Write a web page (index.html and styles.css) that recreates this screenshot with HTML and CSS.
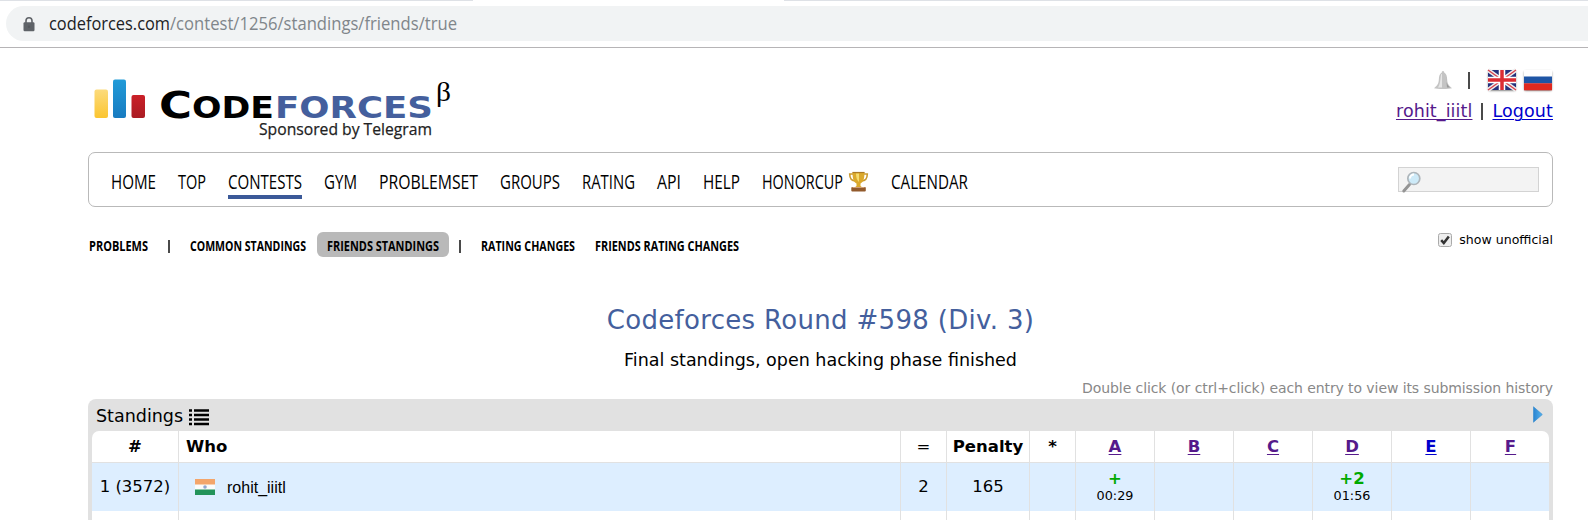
FILE: index.html
```html
<!DOCTYPE html>
<html lang="en">
<head>
<meta charset="utf-8">
<title>Standings - Codeforces</title>
<link rel="stylesheet" href="styles.css">
</head>
<body>
<div class="tabstrip"><i></i><i></i></div>
<div class="toolbar">
  <div class="omnibox">
    <svg class="lock" width="12" height="15" viewBox="0 0 12 15"><path d="M3 6V3.8a3 3 0 0 1 6 0V6" fill="none" stroke="#5f6368" stroke-width="1.6"/><rect x="0.5" y="5.3" width="11" height="9" rx="1.2" fill="#5f6368"/><circle cx="6" cy="9.7" r="1.2" fill="#55595e"/></svg>
    <svg class="url" width="420" height="35"><text x="0" y="24" textLength="121" lengthAdjust="spacingAndGlyphs" fill="#202124">codeforces.com</text><text x="121" y="24" textLength="287" lengthAdjust="spacingAndGlyphs" fill="#80868b">/contest/1256/standings/friends/true</text></svg>
  </div>
</div>
<div class="page">
  <header class="header">
    <svg class="logo" width="370" height="70" viewBox="88 72 370 70">
      <defs>
        <linearGradient id="y" x2="0" y2="1"><stop stop-color="#fcdb7c"/><stop offset="1" stop-color="#fbc530"/></linearGradient>
        <linearGradient id="b" x2="0" y2="1"><stop stop-color="#219bd8"/><stop offset="1" stop-color="#187bc0"/></linearGradient>
        <linearGradient id="r" x2="0" y2="1"><stop stop-color="#cb2028"/><stop offset="1" stop-color="#a91c23"/></linearGradient>
      </defs>
      <rect x="94.500" y="89.500" width="13.500" height="28.500" rx="2" fill="url(#y)"/>
      <rect x="113" y="79.500" width="13" height="38.500" rx="2" fill="url(#b)"/>
      <rect x="131.500" y="95" width="13.500" height="23" rx="2" fill="url(#r)"/>
      <g class="wordmark">
        <text x="159" y="118" font-size="37" textLength="33" lengthAdjust="spacingAndGlyphs">C</text>
        <text x="192" y="118" font-size="31" textLength="82" lengthAdjust="spacingAndGlyphs">ODE</text>
        <text x="275" y="118" font-size="31" textLength="158" lengthAdjust="spacingAndGlyphs" fill="#445f9d">FORCES</text>
      </g>
      <text class="beta" x="436" y="101" textLength="15" lengthAdjust="spacingAndGlyphs">β</text>
      <text class="sponsor" x="259" y="135" textLength="173" lengthAdjust="spacingAndGlyphs">Sponsored by Telegram</text>
    </svg>
    <div class="account">
      <div class="flags">
        <svg class="bell" width="20" height="20" viewBox="0 0 20 20"><path d="M10 1c1 0 1.200 1 1.200 1.600C13.500 4 14 6 14.200 10c.2 3 .8 5 4.800 8.200-3 1-15 1-18 0C5 15 5.600 13 5.800 10 6 6 6.500 4 8.800 2.600 8.800 2 9 1 10 1z" fill="#c4c4c4"/><path d="M8.300 4C7 8 8 13 5 17.500h4V4z" fill="#e6e6e6"/><path d="M13 7c0 5 1 8 4 10.500h-3z" fill="#999"/></svg>
        <span class="bar"></span>
        <svg class="flag uk" width="28" height="20" viewBox="0 0 28 20"><rect width="28" height="20" fill="#25307c"/><path d="M0 0L28 20M28 0L0 20" stroke="#eee" stroke-width="4"/><path d="M0 0L28 20M28 0L0 20" stroke="#d8414d" stroke-width="1.400"/><path d="M14 0V20M0 10H28" stroke="#fff" stroke-width="6.500"/><path d="M14 0V20M0 10H28" stroke="#db2b32" stroke-width="3.500"/></svg>
        <svg class="flag" width="28" height="20" viewBox="0 0 28 20"><rect width="28" height="7" fill="#fff"/><rect y="6.500" width="28" height="7" fill="#1f55a5"/><rect y="13.300" width="28" height="7" fill="#e0291f"/></svg>
      </div>
      <div class="links"><a class="visited" href="#">rohit_iiitl</a><span class="bar"></span><a href="#">Logout</a></div>
    </div>
  </header>
  <nav class="menu">
    <svg width="45" height="26"><text y="20" textLength="45" lengthAdjust="spacingAndGlyphs">HOME</text></svg>
    <svg width="28" height="26"><text y="20" textLength="28" lengthAdjust="spacingAndGlyphs">TOP</text></svg>
    <svg class="current" width="74" height="26"><text y="20" textLength="74" lengthAdjust="spacingAndGlyphs">CONTESTS</text></svg>
    <svg width="33" height="26"><text y="20" textLength="33" lengthAdjust="spacingAndGlyphs">GYM</text></svg>
    <svg width="99" height="26"><text y="20" textLength="99" lengthAdjust="spacingAndGlyphs">PROBLEMSET</text></svg>
    <svg width="60" height="26"><text y="20" textLength="60" lengthAdjust="spacingAndGlyphs">GROUPS</text></svg>
    <svg width="53" height="26"><text y="20" textLength="53" lengthAdjust="spacingAndGlyphs">RATING</text></svg>
    <svg width="24" height="26"><text y="20" textLength="24" lengthAdjust="spacingAndGlyphs">API</text></svg>
    <svg width="37" height="26"><text y="20" textLength="37" lengthAdjust="spacingAndGlyphs">HELP</text></svg>
    <svg width="107" height="26"><text y="20" textLength="81" lengthAdjust="spacingAndGlyphs">HONORCUP</text>
      <g transform="translate(86.500 2.500)"><path d="M5 2.500H1.200c0 4 2 7 6 7M15 2.500h3.800c0 4-2 7-6 7" fill="none" stroke="#c99a32" stroke-width="1.600"/><path d="M4 .8h12c0 6-1 10-4 11.200v2.500l2 1.500H6l2-1.500V12C5 10.800 4 6.800 4 .8z" fill="#dba92c"/><path d="M7.500 2h3v8.500C8.500 9 7.500 6 7.500 2z" fill="#f6dc6e"/><path d="M4 1h12" stroke="#ab7a25" stroke-width="1.200"/><rect x="2.800" y="15.500" width="14.500" height="4.500" rx="1" fill="#925a2c"/><path d="M4 16h12" stroke="#d0a076"/></g></svg>
    <svg width="77" height="26"><text y="20" textLength="77" lengthAdjust="spacingAndGlyphs">CALENDAR</text></svg>
    <div class="search"><svg width="20" height="21" viewBox="0 0 20 21"><path d="M7.500 13.500L1.800 20" stroke="#949494" stroke-width="3" stroke-linecap="round"/><circle cx="11.800" cy="7.500" r="6" fill="#cdeaf8" stroke="#aeb5ba" stroke-width="1.700"/><path d="M8 7.500a4 4 0 0 1 4-4" stroke="#fff" stroke-width="2" fill="none"/></svg></div>
  </nav>
  <div class="submenu">
    <svg width="59" height="25"><text y="19" textLength="59" lengthAdjust="spacingAndGlyphs">PROBLEMS</text></svg>
    <span class="bar first"></span>
    <svg width="116" height="25"><text y="19" textLength="116" lengthAdjust="spacingAndGlyphs">COMMON STANDINGS</text></svg>
    <svg class="pill" width="132" height="25"><text x="10" y="19" textLength="112" lengthAdjust="spacingAndGlyphs">FRIENDS STANDINGS</text></svg>
    <span class="bar second"></span>
    <svg width="94" height="25"><text y="19" textLength="94" lengthAdjust="spacingAndGlyphs">RATING CHANGES</text></svg>
    <svg class="last" width="144" height="25"><text y="19" textLength="144" lengthAdjust="spacingAndGlyphs">FRIENDS RATING CHANGES</text></svg>
    <div class="unofficial"><svg width="14" height="14" viewBox="0 0 14 14"><rect x=".5" y=".5" width="13" height="13" rx="2" fill="#eee" stroke="#aaa"/><path d="M3.200 7.200l2.600 2.800 5-6.500" fill="none" stroke="#333" stroke-width="2.500"/></svg><span>show unofficial</span></div>
  </div>
  <h1 class="title">Codeforces Round #598 (Div. 3)</h1>
  <p class="phase">Final standings, open hacking phase finished</p>
  <p class="hint">Double click (or ctrl+click) each entry to view its submission history</p>
  <section class="datatable">
    <div class="caption"><span>Standings</span><svg width="20" height="16" viewBox="0 0 20 16"><path d="M0 1.500h3M0 6h3M0 10.500h3M0 15h3M5 1.500h15M5 6h15M5 10.500h15M5 15h15" stroke="#000" stroke-width="2.600"/></svg>
      <svg class="next" width="10" height="17" viewBox="0 0 10 17"><defs><linearGradient id="n"><stop stop-color="#2b83d0"/><stop offset="1" stop-color="#55b4ee"/></linearGradient></defs><path d="M.5.8L9.300 8.500.5 16.200z" fill="url(#n)" stroke="#3c8fd0" stroke-width=".7"/></svg></div>
    <div class="grid">
      <div class="row head"><b>#</b><b class="who">Who</b><span class="eq">=</span><b class="pen">Penalty</b><b>*</b><a class="visited">A</a><a class="visited">B</a><a class="visited">C</a><a class="visited">D</a><a>E</a><a class="visited">F</a></div>
      <div class="row mine"><span class="rank">1 (3572)</span><span class="who user"><svg width="20" height="16" viewBox="0 0 20 16"><rect width="20" height="16" rx="1" fill="#fbfbfb"/><rect width="20" height="5.500" fill="#f3a56b"/><rect y="10.500" width="20" height="5.500" fill="#23935a"/><circle cx="10" cy="8" r="1.800" fill="#91a5d0"/></svg><em>rohit_iiitl</em></span><span>2</span><span>165</span><span></span><span class="cell"><strong class="plus">+</strong><small>00:29</small></span><span></span><span></span><span class="cell"><strong>+2</strong><small>01:56</small></span><span></span><span></span></div>
      <div class="row rest"><span></span><span></span><span></span><span></span><span></span><span></span><span></span><span></span><span></span><span></span><span></span></div>
    </div>
  </section>
</div>
</body>
</html>
```
FILE: styles.css
```css
* { box-sizing: border-box; }
body { margin: 0; height: 520px; overflow: hidden; background: #fff; color: #000; font: 17.500px "DejaVu Sans", Verdana, sans-serif; }
svg { display: block; flex: none; overflow: visible; }
p, h1 { margin: 0; font-weight: normal; white-space: nowrap; }
a { color: #0000cc; text-decoration: underline; text-decoration-thickness: 1px; text-underline-offset: 2px; }
a.visited { color: #551a8b; }
.bar { width: 2px; height: 17px; background: #4a4a4a; flex: none; }

.tabstrip { display: flex; justify-content: space-between; height: 1px; }
.tabstrip i { width: 473px; background: #dee1e6; }
.tabstrip i + i { width: 804px; }
.toolbar { height: 47px; padding: 5px 0 0 6px; border-bottom: 1px solid #b6b4b6; }
.omnibox { display: flex; height: 35px; background: #f1f3f4; border-radius: 18px 0 0 18px; padding-left: 17px; }
.lock { margin: 11px 14px 0 0; }
.url { font: 18px "Open Sans", sans-serif; }

.page { width: 1465px; margin-left: 88px; }
.header { display: flex; justify-content: space-between; height: 104px; padding-top: 24px; }
.wordmark { font-family: "DejaVu Sans", sans-serif; font-weight: bold; }
.beta { font: 27px "Liberation Serif", serif; }
.sponsor { font: 17px "Open Sans", sans-serif; fill: #222; stroke: #222; stroke-width: .25px; }
.account { display: flex; flex-direction: column; align-items: flex-end; }
.flags { display: flex; align-items: center; height: 20px; margin: -2px 1px 0 0; }
.flags .bar { margin: 0 18px 0 15px; }
.flag { border-radius: 2px; box-shadow: 0 1px 2px #888; }
.uk { margin-right: 8px; }
.links { display: flex; align-items: center; height: 24px; margin-top: 9px; letter-spacing: .1px; }
.links .bar { margin: 0 9px; }

.menu { display: flex; height: 55px; border: 1px solid #b9b9b9; border-radius: 7px; padding: 16px 13px 0 22px; gap: 22px; font: 19.500px "Open Sans", sans-serif; }
.current { height: 30px; border-bottom: 4px solid #3b5998; }
.search { width: 141px; height: 25px; margin: -2px 0 0 auto; border: 1px solid #d3d3d3; background: #f3f3f3; padding: 3px; }

.submenu { display: flex; height: 25px; margin-top: 25px; padding-left: 1px; font: bold 15px "Open Sans", sans-serif; }
.submenu .bar { height: 13px; margin-top: 8px; }
.first { margin: 0 20px; }
.second { margin: 0 20px 0 10px; }
.pill { margin-left: 11px; background: #b9b9b9; border-radius: 6px; }
.last { margin-left: 20px; }
.unofficial { display: flex; gap: 7px; margin-left: auto; padding-top: 1px; font: 12.550px/14px "DejaVu Sans", sans-serif; white-space: nowrap; }

.title { margin-top: 46px; height: 34px; line-height: 34px; font-size: 26px; letter-spacing: .32px; color: #445f9d; text-align: center; }
.phase { margin-top: 12px; height: 22px; line-height: 22px; text-align: center; }
.hint { margin-top: 8px; height: 18px; line-height: 18px; font-size: 14px; letter-spacing: -.085px; color: #888; text-align: right; }

.datatable { margin-top: 2px; background: #e1e1e1; border-radius: 8px 8px 0 0; padding: 0 4px; }
.caption { display: flex; height: 32px; padding: 0 6px 0 4px; line-height: 34px; }
.caption svg { margin: 10px 0 0 6px; }
.caption .next { margin: 7px 0 0 auto; }
.grid { border-radius: 7px 7px 0 0; overflow: hidden; }
.row { display: grid; grid-template-columns: 86px 721px 45px 82px 45px repeat(5, 78px) 79px; gap: 1px; height: 31px; margin-bottom: 1px; line-height: 31px; text-align: center; font-size: 16.500px; }
.row > * { background: #fff; white-space: nowrap; }
.head > a { font-weight: bold; }
.row > .who { text-align: left; padding-left: 7px; }
.mine { height: 47px; line-height: 48px; }
.mine > * { background: #ddeeff; }
.row > .user { display: flex; padding: 0 0 0 16px; }
.user svg { margin: 16px 12px 0 0; }
.user em { font: normal 16px/50px "Liberation Sans", sans-serif; }
.cell { display: flex; flex-direction: column; padding-top: 6px; }
.cell strong { line-height: 20px; color: #00a900; }
.cell small { font-size: 12.800px; line-height: 14px; }
```
